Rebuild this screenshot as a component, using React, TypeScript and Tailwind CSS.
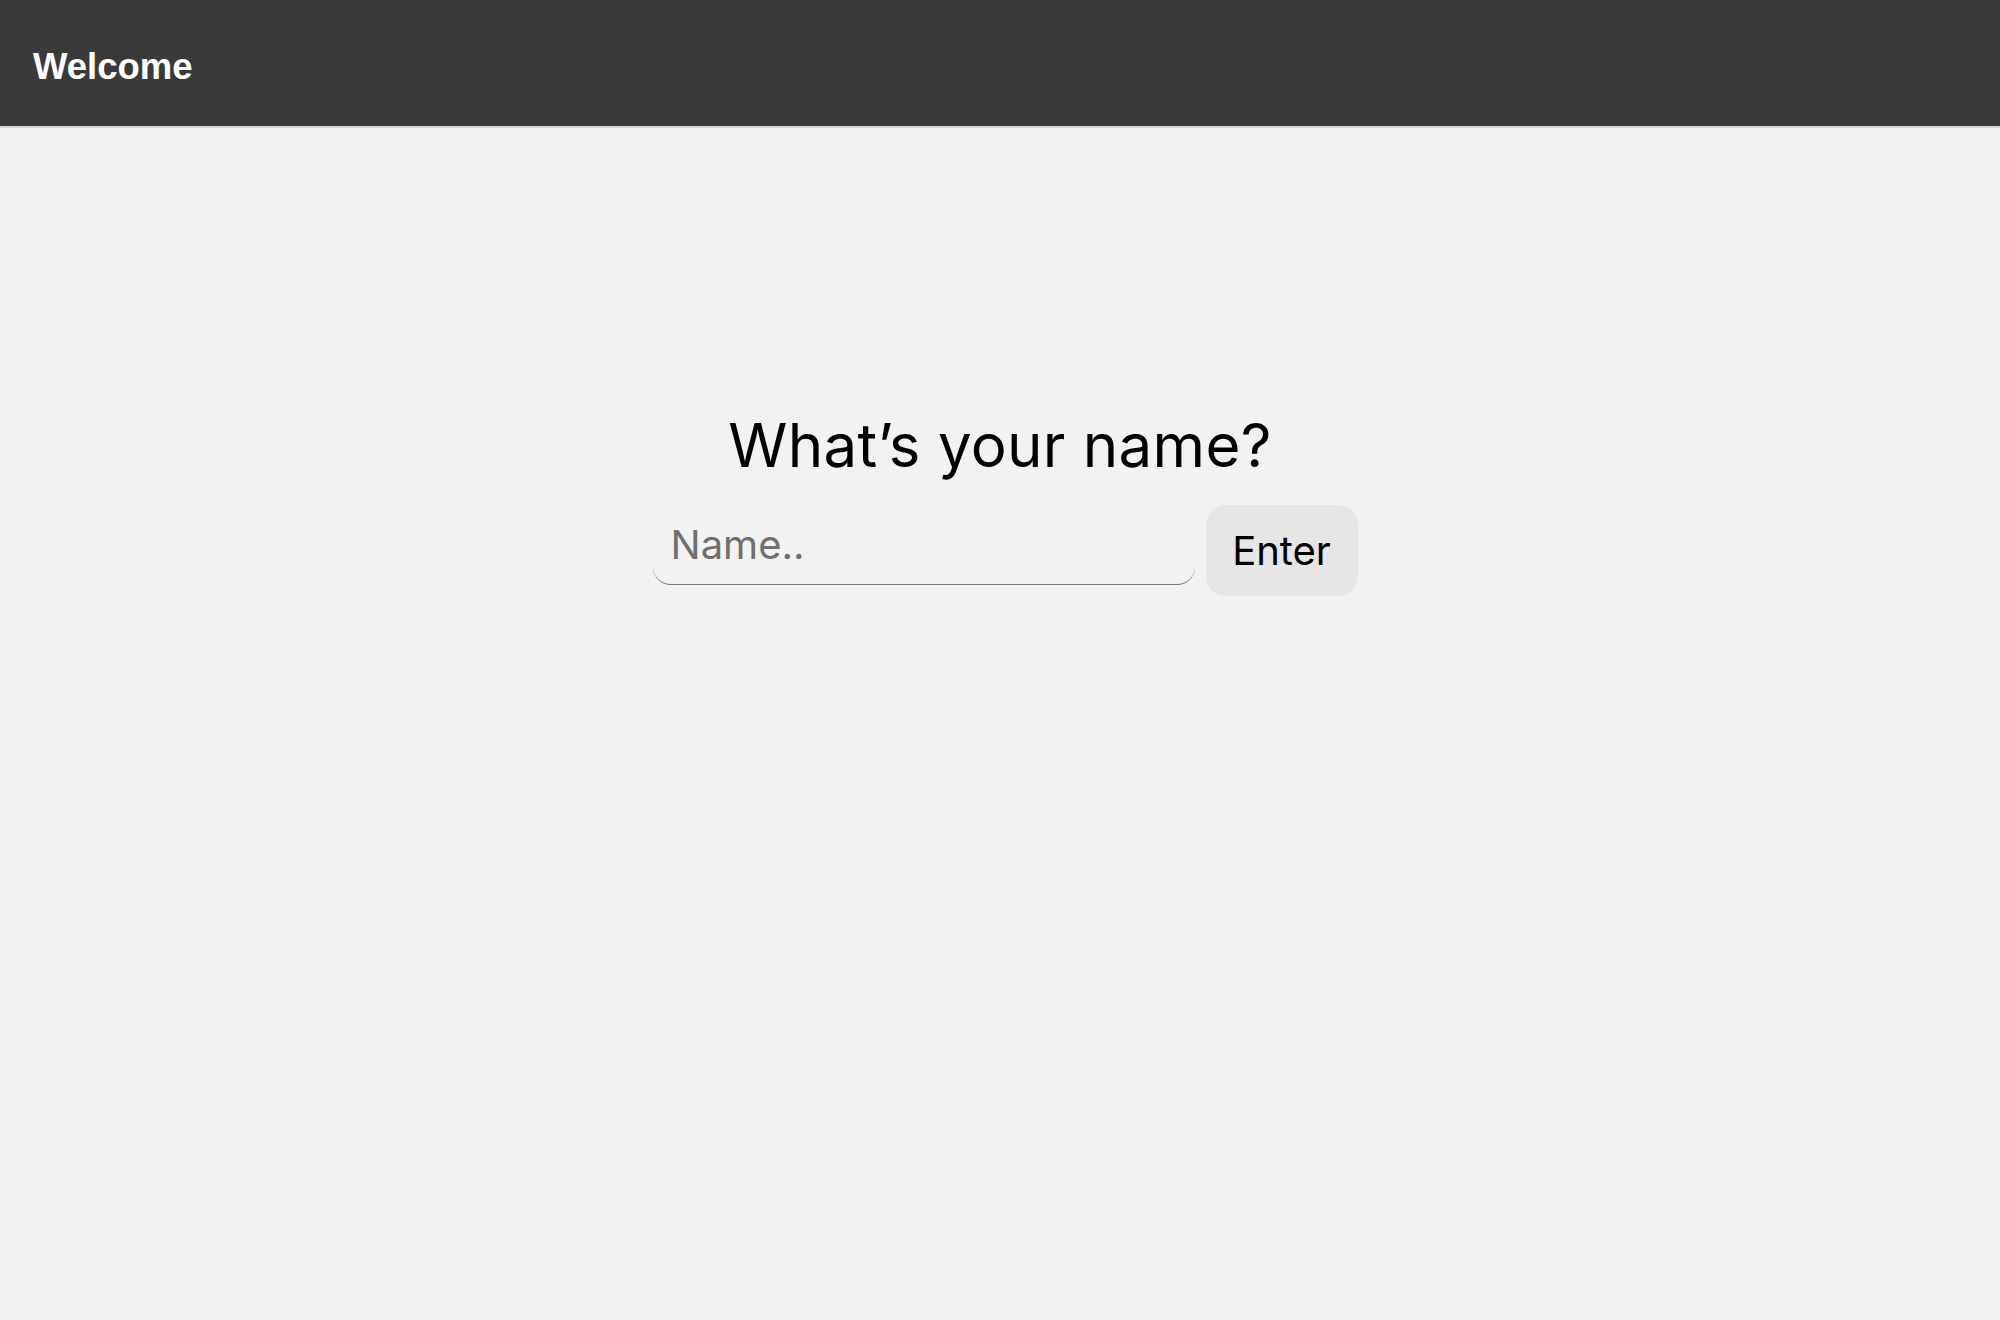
import { useState } from "react";

export default function App() {
  const [name, setName] = useState("");

  return (
    <div className="min-h-[1320px] bg-[#f2f2f2] font-['Inter','Noto_Sans',sans-serif]">
      {/* Top bar */}
      <header className="h-[128px] bg-[#3a3a3a] border-b-2 border-[#dadada] flex items-center pl-[33px] pt-[7px]">
        <h1 className="text-white text-[36.5px] font-bold font-['Liberation_Sans',Arial,sans-serif] leading-[42px]">
          Welcome
        </h1>
      </header>

      {/* Name form */}
      <main className="flex flex-col items-center pt-[281px]">
        <h2 className="text-black text-[60px] leading-[72px] font-normal tracking-[0.3px]">
          What’s your name?
        </h2>
        <form
          className="mt-6 flex items-start gap-[11px] ml-[10px]"
          onSubmit={(e) => e.preventDefault()}
        >
          <input
            value={name}
            onChange={(e) => setName(e.target.value)}
            placeholder="Name.."
            className="w-[542px] h-[80px] bg-transparent border-b border-[#777777] rounded-b-[18px] pl-[18px] text-[40px] text-black placeholder:text-[#6f6f6f] outline-none"
          />
          <button
            type="submit"
            className="w-[152px] h-[91px] bg-[#e6e6e6] rounded-[20px] text-[40px] text-black"
          >
            Enter
          </button>
        </form>
      </main>
    </div>
  );
}
